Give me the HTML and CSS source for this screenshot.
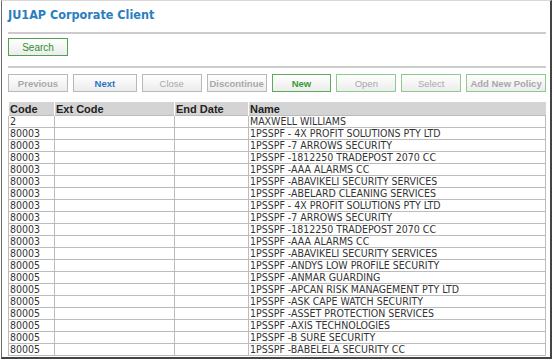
FILE: index.html
```html
<!DOCTYPE html>
<html>
  <head>
    <title>JU1AP Corporate Client</title>
    <link rel="stylesheet" href="styles.css">
  </head>
  <body>
    <div class="frame">
      <h1>JU1AP Corporate Client</h1>
      <hr>
      <div class="bar">
        <button class="btn green search">Search</button>
      </div>
      <hr>
      <div class="bar buttons">
        <button class="btn off w60">Previous</button>
        <button class="btn blue w64">Next</button>
        <button class="btn off thin w60">Close</button>
        <button class="btn off w60">Discontinue</button>
        <button class="btn green w60">New</button>
        <button class="btn green dim thin w60">Open</button>
        <button class="btn green dim thin w60">Select</button>
        <button class="btn green dim w80">Add New Policy</button>
      </div>
      <table class="grid">
        <thead>
          <tr><th class="c1">Code</th><th class="c2">Ext Code</th><th class="c3">End Date</th><th>Name</th></tr>
        </thead>
        <tbody>
          <tr><td>2</td><td></td><td></td><td>MAXWELL WILLIAMS</td></tr>
          <tr><td>80003</td><td></td><td></td><td>1PSSPF - 4X PROFIT SOLUTIONS PTY LTD</td></tr>
          <tr><td>80003</td><td></td><td></td><td>1PSSPF -7 ARROWS SECURITY</td></tr>
          <tr><td>80003</td><td></td><td></td><td>1PSSPF -1812250 TRADEPOST 2070 CC</td></tr>
          <tr><td>80003</td><td></td><td></td><td>1PSSPF -AAA ALARMS CC</td></tr>
          <tr><td>80003</td><td></td><td></td><td>1PSSPF -ABAVIKELI SECURITY SERVICES</td></tr>
          <tr><td>80003</td><td></td><td></td><td>1PSSPF -ABELARD CLEANING SERVICES</td></tr>
          <tr><td>80003</td><td></td><td></td><td>1PSSPF - 4X PROFIT SOLUTIONS PTY LTD</td></tr>
          <tr><td>80003</td><td></td><td></td><td>1PSSPF -7 ARROWS SECURITY</td></tr>
          <tr><td>80003</td><td></td><td></td><td>1PSSPF -1812250 TRADEPOST 2070 CC</td></tr>
          <tr><td>80003</td><td></td><td></td><td>1PSSPF -AAA ALARMS CC</td></tr>
          <tr><td>80003</td><td></td><td></td><td>1PSSPF -ABAVIKELI SECURITY SERVICES</td></tr>
          <tr><td>80005</td><td></td><td></td><td>1PSSPF -ANDYS LOW PROFILE SECURITY</td></tr>
          <tr><td>80005</td><td></td><td></td><td>1PSSPF -ANMAR GUARDING</td></tr>
          <tr><td>80005</td><td></td><td></td><td>1PSSPF -APCAN RISK MANAGEMENT PTY LTD</td></tr>
          <tr><td>80005</td><td></td><td></td><td>1PSSPF -ASK CAPE WATCH SECURITY</td></tr>
          <tr><td>80005</td><td></td><td></td><td>1PSSPF -ASSET PROTECTION SERVICES</td></tr>
          <tr><td>80005</td><td></td><td></td><td>1PSSPF -AXIS TECHNOLOGIES</td></tr>
          <tr><td>80005</td><td></td><td></td><td>1PSSPF -B SURE SECURITY</td></tr>
          <tr><td>80005</td><td></td><td></td><td>1PSSPF -BABELELA SECURITY CC</td></tr>
        </tbody>
      </table>
    </div>
  </body>
</html>
```
FILE: styles.css
```css
body {
  margin: 0;
  background: #ffffff;
  font-family: 'DejaVu Sans Condensed', 'DejaVu Sans', Verdana, sans-serif;
}

.frame {
  margin-left: 1px;
  width: 538px;
  height: 356px;
  padding: 0 4px 0 6px;
  border-left: 1px solid #6a6a6a;
  border-top: 1px solid #d8d8d8;
  border-right: 2px solid #444444;
  border-bottom: 2px solid #444444;
  box-sizing: content-box;
  overflow: hidden;
}

h1 {
  margin: 0;
  padding-top: 6px;
  height: 20px;
  font-size: 12.5px;
  font-weight: bold;
  color: #2a7ec0;
}

hr {
  margin: 5px 0 0 0;
  height: 2px;
  border: none;
  background: #cccccc;
}

.bar {
  display: flex;
  gap: 6px;
  padding-top: 4px;
  height: 23px;
}

.buttons {
  padding-top: 6px;
  height: 28px;
  gap: 5px;
}

.btn {
  height: 18px;
  padding: 0;
  font-family: Arial, 'Liberation Sans', sans-serif;
  font-size: 9.5px;
  font-weight: bold;
  background: linear-gradient(#ffffff, #ececec);
  border: 1px solid #b8b8b8;
  color: #a8a8a8;
}

.thin {
  font-weight: normal;
}

.green {
  border-color: #5daa5d;
  color: #3a9a3a;
}

.dim {
  border-color: #8fc98f;
  color: #a8a8a8;
}

.blue {
  color: #2b74c4;
}

.search {
  width: 60px;
  font-size: 10px;
  font-weight: normal;
  border-color: #4ea34e;
  color: #2f8f2f;
}

.w60 {
  width: 60px;
}

.w64 {
  width: 64px;
}

.w80 {
  width: 80px;
}

.grid {
  width: 538px;
  border-collapse: collapse;
  font-size: 10.5px;
  color: #333333;
}

.grid th {
  height: 13px;
  padding: 0 0 0 1px;
  background: #d4d4d4;
  text-align: left;
  font-family: Arial, 'Liberation Sans', sans-serif;
  font-size: 11px;
  font-weight: bold;
  color: #222222;
  border-left: 1px solid #ffffff;
}

.grid td {
  height: 11px;
  padding: 0 0 0 1px;
  line-height: 11px;
  border: 1px solid #bcbcbc;
  white-space: nowrap;
}

.c1 {
  width: 44px;
}

.c2 {
  width: 118px;
}

.c3 {
  width: 72px;
}
```
